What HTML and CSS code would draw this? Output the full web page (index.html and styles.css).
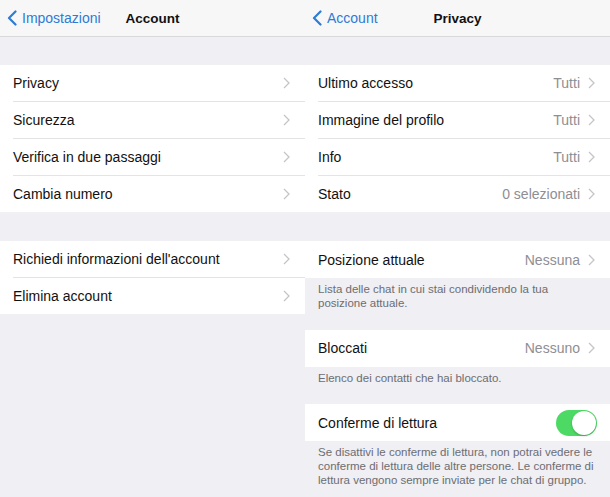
FILE: index.html
```html
<!DOCTYPE html>
<html lang="it">
<head>
<meta charset="utf-8">
<link rel="stylesheet" href="styles.css">
</head>
<body>
<div class="screens">
  <section class="panel">
    <header class="nav">
      <a class="back"><svg class="back-icon" viewBox="0 0 10 16"><path d="M8.5 1.5 L2 8 L8.5 14.5"/></svg>Impostazioni</a>
      <h1 class="title">Account</h1>
    </header>
    <div class="content">
      <ul class="group">
        <li class="row"><span class="label">Privacy</span><svg class="chev" viewBox="0 0 7 12"><path d="M1 1 L6 6 L1 11"/></svg></li>
        <li class="row"><span class="label">Sicurezza</span><svg class="chev" viewBox="0 0 7 12"><path d="M1 1 L6 6 L1 11"/></svg></li>
        <li class="row"><span class="label">Verifica in due passaggi</span><svg class="chev" viewBox="0 0 7 12"><path d="M1 1 L6 6 L1 11"/></svg></li>
        <li class="row"><span class="label">Cambia numero</span><svg class="chev" viewBox="0 0 7 12"><path d="M1 1 L6 6 L1 11"/></svg></li>
      </ul>
      <ul class="group">
        <li class="row"><span class="label">Richiedi informazioni dell'account</span><svg class="chev" viewBox="0 0 7 12"><path d="M1 1 L6 6 L1 11"/></svg></li>
        <li class="row"><span class="label">Elimina account</span><svg class="chev" viewBox="0 0 7 12"><path d="M1 1 L6 6 L1 11"/></svg></li>
      </ul>
    </div>
  </section>
  <section class="panel">
    <header class="nav">
      <a class="back"><svg class="back-icon" viewBox="0 0 10 16"><path d="M8.5 1.5 L2 8 L8.5 14.5"/></svg>Account</a>
      <h1 class="title">Privacy</h1>
    </header>
    <div class="content">
      <ul class="group">
        <li class="row"><span class="label">Ultimo accesso</span><span class="value">Tutti</span><svg class="chev" viewBox="0 0 7 12"><path d="M1 1 L6 6 L1 11"/></svg></li>
        <li class="row"><span class="label">Immagine del profilo</span><span class="value">Tutti</span><svg class="chev" viewBox="0 0 7 12"><path d="M1 1 L6 6 L1 11"/></svg></li>
        <li class="row"><span class="label">Info</span><span class="value">Tutti</span><svg class="chev" viewBox="0 0 7 12"><path d="M1 1 L6 6 L1 11"/></svg></li>
        <li class="row"><span class="label">Stato</span><span class="value">0 selezionati</span><svg class="chev" viewBox="0 0 7 12"><path d="M1 1 L6 6 L1 11"/></svg></li>
      </ul>
      <ul class="group group-tight">
        <li class="row"><span class="label">Posizione attuale</span><span class="value">Nessuna</span><svg class="chev" viewBox="0 0 7 12"><path d="M1 1 L6 6 L1 11"/></svg></li>
      </ul>
      <p class="footer">Lista delle chat in cui stai condividendo la tua<br>posizione attuale.</p>
      <ul class="group group-tight">
        <li class="row"><span class="label">Bloccati</span><span class="value">Nessuno</span><svg class="chev" viewBox="0 0 7 12"><path d="M1 1 L6 6 L1 11"/></svg></li>
      </ul>
      <p class="footer">Elenco dei contatti che hai bloccato.</p>
      <ul class="group group-tight">
        <li class="row"><span class="label">Conferme di lettura</span><span class="switch on"><span class="knob"></span></span></li>
      </ul>
      <p class="footer">Se disattivi le conferme di lettura, non potrai vedere le conferme di lettura delle altre persone. Le conferme di lettura vengono sempre inviate per le chat di gruppo.</p>
    </div>
  </section>
</div>
</body>
</html>
```

FILE: styles.css
```css
* { box-sizing: border-box; }
html, body {
  margin: 0;
  padding: 0;
  background: #efeff4;
  font-family: "Liberation Sans", Arial, sans-serif;
  color: #111;
}
.screens {
  display: flex;
  width: 610px;
  height: 497px;
  overflow: hidden;
}
.panel {
  width: 305px;
  flex: 0 0 305px;
  background: #efeff4;
  display: flex;
  flex-direction: column;
  overflow: hidden;
}
.nav {
  flex: none;
  height: 37px;
  background: #f7f7f8;
  border-bottom: 1px solid #d8d8dc;
  display: grid;
  grid-template-columns: 1fr;
  align-items: center;
}
.back {
  grid-area: 1 / 1;
  justify-self: start;
  display: flex;
  align-items: center;
  padding-left: 7px;
  color: #2d7bd5;
  font-size: 14px;
}
.back-icon {
  width: 10px;
  height: 16px;
  margin-right: 5px;
  fill: none;
  stroke: #2d7bd5;
  stroke-width: 2.2;
  stroke-linecap: round;
  stroke-linejoin: round;
}
.title {
  grid-area: 1 / 1;
  justify-self: center;
  margin: 0;
  font-size: 13.5px;
  font-weight: bold;
  color: #111;
}
.content {
  flex: none;
  padding-top: 28px;
}
.group {
  list-style: none;
  margin: 0 0 29px;
  padding: 0 0 0 13px;
  background: #fff;
}
.group-tight { margin-bottom: 0; }
.row {
  height: 37px;
  display: flex;
  align-items: center;
  padding-right: 15px;
  border-bottom: 1px solid #e4e4e7;
  font-size: 14px;
}
.row:last-child {
  height: 36px;
  border-bottom: none;
}
.group-tight .row:last-child { height: 37px; }
.label {
  flex: 1;
  color: #111;
}
.value {
  color: #8e8e93;
  margin-right: 8px;
}
.chev {
  width: 7px;
  height: 12px;
  fill: none;
  stroke: #c4c4c9;
  stroke-width: 1.3;
}
.footer {
  margin: 0;
  padding: 4px 13px 19.5px;
  font-size: 11.5px;
  line-height: 14px;
  color: #6d6d72;
}
.switch {
  width: 41px;
  height: 26px;
  border-radius: 13px;
  background: #4cd964;
  position: relative;
  margin-right: -2px;
}
.knob {
  position: absolute;
  right: 1px;
  top: 1px;
  width: 24px;
  height: 24px;
  border-radius: 50%;
  background: #fff;
  box-shadow: 0 1px 2px rgba(0,0,0,0.25);
}
```
